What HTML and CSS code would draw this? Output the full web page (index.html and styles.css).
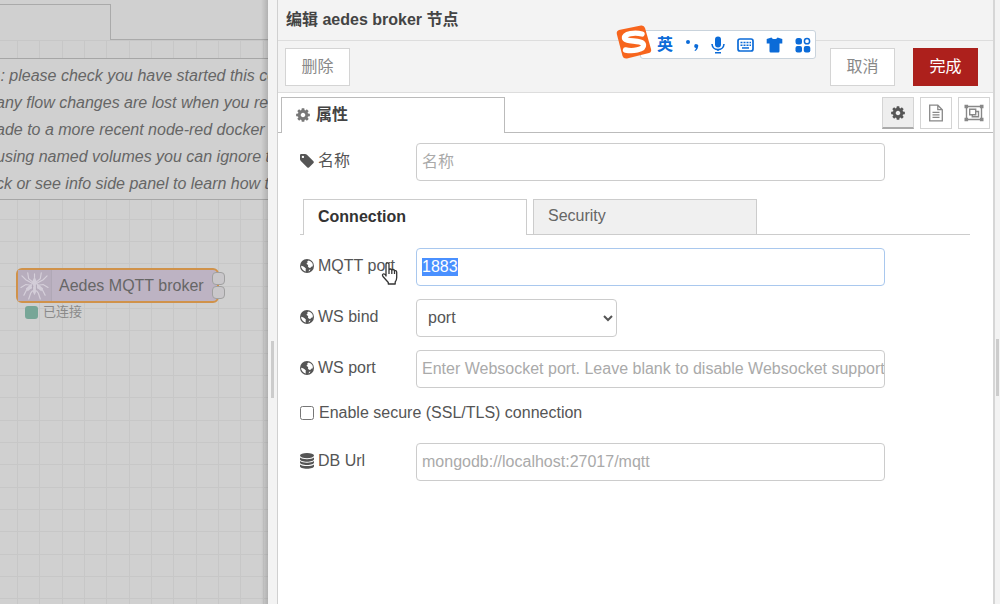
FILE: index.html
```
<!DOCTYPE html>
<html lang="zh-CN">

<head>
    <meta charset="UTF-8">
    <meta name="viewport" content="width=device-width, initial-scale=1.0">
    <title>Node-RED</title>
    <link rel="stylesheet" href="styles.css">
</head>

<body>
    <!-- shared icons -->
    <svg class="symbols" aria-hidden="true">
        <symbol id="icon-cog" viewBox="0 0 1792 1792">
            <path d="M1152 896q0-106-75-181t-181-75-181 75-75 181 75 181 181 75 181-75 75-181zm512-109v222q0 12-8 23t-20 13l-185 28q-19 54-39 91 35 50 107 138 10 12 10 25t-9 23q-27 37-99 108t-94 71q-12 0-26-9l-138-108q-44 23-91 38-16 136-29 186-7 28-36 28h-222q-14 0-24.5-8.5t-11.5-21.5l-28-184q-49-16-90-37l-141 107q-10 9-25 9-14 0-25-11-126-114-165-168-7-10-7-23 0-12 8-23 15-21 51-66.5t54-70.5q-27-50-41-99l-183-27q-13-2-21-12.5t-8-23.5v-222q0-12 8-23t19-13l186-28q14-46 39-92-40-57-107-138-10-12-10-24 0-10 9-23 26-36 98.5-107.5t94.5-71.5q13 0 26 10l138 107q44-23 91-38 16-136 29-186 7-28 36-28h222q14 0 24.5 8.5t11.5 21.5l28 184q49 16 90 37l142-107q9-9 24-9 13 0 25 10 129 119 165 170 7 8 7 22 0 12-8 23-15 21-51 66.5t-54 70.5q26 50 41 98l183 28q13 2 21 12.5t8 23.5z"/>
        </symbol>
        <symbol id="icon-tag" viewBox="0 128 1536 1536">
            <path d="M448 448q0-53-37.5-90.5t-90.5-37.5-90.5 37.5-37.5 90.5 37.5 90.5 90.5 37.5 90.5-37.5 37.5-90.5zm1067 576q0 53-37 90l-491 492q-39 37-91 37-53 0-90-37l-715-716q-38-37-64.5-101t-26.5-117v-416q0-52 38-90t90-38h416q53 0 117 26.5t102 64.5l715 714q37 39 37 91z"/>
        </symbol>
        <symbol id="icon-globe" viewBox="0 0 14 14">
            <circle cx="7" cy="7" r="7"/>
            <path fill="#fff" d="M7.300 2.200l1.500-.7 2 .9 1.500 1.700.6 1.900-.4 1.400-1.300.3-.9 1.200-1.300-.2-1.100-1.300.3-1.500-1.300-.6-.3-1.300 1-.3z"/>
            <path fill="#fff" d="M1.100 6.700l1.900.5 1.900 1.200 1.100 1.400-.5 1.200.6 1.500-1.900-.6-1.700-1.500-1.200-2z"/>
            <path fill="#fff" d="M9 11l1.500-.8-.7 1.500-1.200.7z"/>
        </symbol>
        <symbol id="icon-database" viewBox="0 0 14 16">
            <ellipse cx="7" cy="2.6" rx="7" ry="2.6"/>
            <path d="M0 4.6c1.400 1.200 4 1.700 7 1.700s5.600-.5 7-1.700v1.600c0 1.400-3 2.500-7 2.500s-7-1.100-7-2.500zM0 8c1.400 1.200 4 1.700 7 1.700s5.600-.5 7-1.700v1.600c0 1.400-3 2.500-7 2.500s-7-1.100-7-2.500zM0 11.400c1.400 1.200 4 1.700 7 1.700s5.600-.5 7-1.700v1.900c0 1.400-3 2.500-7 2.500s-7-1.100-7-2.500z"/>
        </symbol>
        <symbol id="icon-file" viewBox="0 0 16 18">
            <path fill="none" stroke="currentColor" stroke-width="1.300" d="M1.700 1.200h8.100l4.500 4.500v11.100H1.700zM9.800 1.200v4.500h4.500M4.500 8.300h7M4.500 10.800h7M4.500 13.300h7"/>
        </symbol>
        <symbol id="icon-group" viewBox="0 0 20 18">
            <path fill="none" stroke="currentColor" stroke-width="1.400" d="M3 2.500h14M3 15.500h14M2.500 3v12M17.500 3v12M5.700 5.200h6v5.600h-6zM11.700 7.500h2.800v5.300H8.300v-2"/>
            <path d="M.5.800h3.600v3.400H.5zM15.900.800h3.600v3.400h-3.600zM.5 13.800h3.600v3.400H.5zM15.900 13.800h3.600v3.400h-3.600z"/>
        </symbol>
    </svg>

    <div class="editor">
        <main class="workspace">
            <div class="workspace-tabs">
                <div class="workspace-tab"></div>
                <div class="workspace-tabs-rest"></div>
            </div>
            <div class="canvas">
                <svg class="grid" aria-hidden="true">
                    <defs>
                        <pattern id="grid" x="17" y="0" width="67" height="67" patternUnits="userSpaceOnUse">
                            <path d="M0 0h1v67H0zM22 0h1v67h-1zM45 0h1v67h-1zM0 0h67v1H0zM0 22h67v1H0zM0 45h67v1H0z" fill="#c7c7c7"/>
                        </pattern>
                    </defs>
                    <rect width="100%" height="100%" fill="url(#grid)"/>
                </svg>
                <div class="note">
                    <p>G: please check you have started this co<br>
                    any flow changes are lost when you rec<br>
                    ade to a more recent node-red docker in<br>
                    using named volumes you can ignore th<br>
                    ck or see info side panel to learn how to</p>
                </div>
                <div class="node">
                    <div class="node-body">
                        <svg class="node-icon" viewBox="0 0 30 30" aria-hidden="true">
                            <g fill="none" stroke="#d6d0da" stroke-width="1.200" stroke-linecap="round">
                                <path d="M14 12L9 8 8 2M16 12l5-4 1-6M13 13L6 9 2 5M17 13l7-4 4-4M13 15l-7-1-5 3M17 15l7-1 5 3M13 17l-6 2-3 6M17 17l6 2 3 6M14 19l-3 4-2 6M16 19l3 4 2 6"/>
                                <path d="M15 3v6"/>
                            </g>
                            <path fill="#d3cdd8" d="M15 6l2 4 1 5-1 6-2 4-2-4-1-6 1-5zM12 13l-6 5 2 3 6-5zM18 13l6 5-2 3-6-5z"/>
                            <path stroke="#b0a7b6" d="M13 14v6M17 14v6"/>
                        </svg>
                        <span class="node-label">Aedes MQTT broker</span>
                    </div>
                    <span class="port port-first"></span>
                    <span class="port port-second"></span>
                    <div class="node-status"><span class="status-dot"></span>已连接</div>
                </div>
            </div>
        </main>

        <div class="separator"><span class="grip"></span></div>

        <section class="tray">
            <h1 class="tray-title">编辑 aedes broker 节点</h1>
            <div class="tray-toolbar">
                <button type="button" class="button">删除</button>
                <div class="toolbar-right">
                    <button type="button" class="button">取消</button>
                    <button type="button" class="button primary">完成</button>
                </div>
            </div>

            <div class="tray-tabs">
                <span class="tab-edge"></span>
                <div class="tray-tab"><svg class="icon"><use href="#icon-cog"/></svg>属性</div>
                <div class="tray-tabs-rest">
                    <button type="button" class="icon-button selected" aria-label="属性"><svg class="icon"><use href="#icon-cog"/></svg></button>
                    <button type="button" class="icon-button" aria-label="描述"><svg class="icon-file"><use href="#icon-file"/></svg></button>
                    <button type="button" class="icon-button" aria-label="外观"><svg class="icon-group"><use href="#icon-group"/></svg></button>
                </div>
            </div>

            <form class="node-form">
                <div class="form-row">
                    <label for="name"><svg class="icon-label"><use href="#icon-tag"/></svg>名称</label>
                    <input type="text" id="name" placeholder="名称">
                </div>

                <div class="form-tabs">
                    <button type="button" class="form-tab active">Connection</button>
                    <button type="button" class="form-tab">Security</button>
                </div>

                <div class="form-row">
                    <label for="mqttPort"><svg class="icon-label"><use href="#icon-globe"/></svg>MQTT port</label>
                    <input type="text" id="mqttPort" value="1883">
                </div>
                <div class="form-row">
                    <label for="wsBind"><svg class="icon-label"><use href="#icon-globe"/></svg>WS bind</label>
                    <select id="wsBind">
                        <option>port</option>
                    </select>
                </div>
                <div class="form-row">
                    <label for="wsPort"><svg class="icon-label"><use href="#icon-globe"/></svg>WS port</label>
                    <input type="text" id="wsPort" placeholder="Enter Websocket port. Leave blank to disable Websocket support">
                </div>
                <div class="form-check">
                    <input type="checkbox" id="useTls">
                    <label for="useTls">Enable secure (SSL/TLS) connection</label>
                </div>
                <div class="form-row">
                    <label for="dbUrl"><svg class="icon-label icon-database"><use href="#icon-database"/></svg>DB Url</label>
                    <input type="text" id="dbUrl" placeholder="mongodb://localhost:27017/mqtt">
                </div>
            </form>
        </section>

        <div class="separator sidebar-separator"><span class="grip"></span></div>
    </div>

    <!-- input method bar floating over the editor -->
    <div class="ime">
        <svg class="ime-logo" viewBox="0 0 36 36" aria-hidden="true">
            <path fill="#f7651d" d="M3 5L25 0.500q3-.5 4 2.500l6 21q.8 3-2 4L11 33.500q-3.500.5-4.500-2.500L.8 9Q.2 6 3 5z"/>
            <path fill="none" stroke="#fff" stroke-width="5.400" stroke-linecap="round" d="M26 9C19 7 8 8.500 8.500 13c.5 4.500 18.500 1.500 19 7 .4 5-11 6.500-18 5"/>
        </svg>
        <div class="ime-bar">
            <span class="ime-mode">英</span>
            <svg width="14" height="18" viewBox="0 0 14 18"><circle cx="3" cy="6" r="2"/><path d="M9.200 10a2 2 0 1 1 3.800 1c-.3 2-1.400 3.500-3 4l-.5-.8c1-.6 1.400-1.300 1.400-2.200-1 0-1.700-.8-1.700-2z"/></svg>
            <svg width="14" height="18" viewBox="0 0 14 18"><rect x="4" y="0.500" width="6" height="11" rx="3"/><path fill="none" stroke="currentColor" stroke-width="1.600" d="M1 8c.5 7.500 11.500 7.500 12 0M7 13.500V15M4 16.700h6"/></svg>
            <svg width="17" height="18" viewBox="0 0 17 18"><rect x="1" y="3" width="15" height="12" rx="2" fill="none" stroke="currentColor" stroke-width="1.700"/><path fill="none" stroke="currentColor" stroke-width="1.500" stroke-dasharray="2 1" d="M3.500 6.500h10.500M3.500 9.200h10.500"/><path d="M5 11.200h7v1.500H5z"/></svg>
            <svg width="17" height="18" viewBox="0 0 17 18"><path d="M5.500 1.500c1 2 5 2 6 0L16.300 3v4.500h-2.800v7.800q0 1.200-1.200 1.200H4.700q-1.200 0-1.200-1.200V7.500H.7V3z"/></svg>
            <svg width="16" height="18" viewBox="0 0 16 18"><rect x="0.500" y="2" width="6.500" height="6.500" rx="2.500"/><circle cx="12" cy="5.200" r="2.600" fill="none" stroke="currentColor" stroke-width="1.500"/><rect x="0.500" y="10" width="6.500" height="6.500" rx="2"/><rect x="8.800" y="10" width="6.500" height="6.500" rx="2"/></svg>
        </div>
    </div>

    <svg class="pointer" viewBox="0 0 17 23" aria-hidden="true">
        <path fill="#fff" stroke="#333" stroke-width="1.300" stroke-linejoin="round" d="M5 14.500V2.500q0-1.700 1.500-1.700T8 2.500V8q.3-1 1.400-1t1.400 1.300q.4-.8 1.400-.8t1.300 1.500q.5-.6 1.300-.4.900.2.900 1.600v5.300q0 2.500-1.500 4.500v2H7.300v-1.500L2.200 14.800q-1.500-2 0-2.800 1.200-.5 2.800 1.500M8 8v4M10.800 8.500V12M13.500 9v3"/>
    </svg>

    <script>
        var mqttPort = document.getElementById("mqttPort");
        mqttPort.focus();
        mqttPort.select();
    </script>
</body>

</html>
```
FILE: styles.css
```
* {
    box-sizing: border-box;
}

body {
    margin: 0;
    height: 100vh;
    overflow: hidden;
    font-family: "Liberation Sans", "Noto Sans CJK SC", sans-serif;
    font-size: 16px;
    line-height: 20px;
    color: #555;
    background: #f3f3f3;
}

button,
input,
select {
    font: inherit;
    color: inherit;
}

svg {
    fill: currentColor;
    flex: none;
}

.symbols {
    position: absolute;
    width: 0;
    height: 0;
}

.editor {
    display: flex;
    height: 100%;
}

/* workspace */
.workspace {
    position: relative;
    display: flex;
    flex-direction: column;
    flex: 0 0 268px;
    overflow: hidden;
    background: #d0d0d0;
}

.workspace::after {
    content: "";
    position: absolute;
    top: 0;
    right: 0;
    bottom: 0;
    width: 7px;
    background: linear-gradient(to right, rgba(0, 0, 0, 0), rgba(0, 0, 0, 0.15));
}

.workspace-tabs {
    display: flex;
    height: 40px;
    padding-top: 4px;
}

.workspace-tab {
    width: 111px;
    border: solid #aaa;
    border-width: 1px 1px 0 0;
}

.workspace-tabs-rest {
    flex: 1;
    border-bottom: 1px solid #aaa;
}

.canvas {
    position: relative;
    flex: 1;
    padding-top: 18px;
}

.grid {
    position: absolute;
    top: 0;
    left: 0;
    width: 100%;
    height: 100%;
}

.note {
    position: relative;
    padding: 3px 0 2px;
    border: solid #a6a6a6;
    border-width: 1px 0;
    background: #d0d0d0;
    color: #666;
    font-style: italic;
    line-height: 27px;
    white-space: nowrap;
}

.note p {
    margin: 0 0 0 -4px;
    text-indent: -8px;
}

.node {
    position: absolute;
    top: 228px;
    left: 16px;
    width: 203px;
}

.node-body {
    display: flex;
    align-items: center;
    height: 35px;
    border: 2px solid #d0924a;
    border-radius: 6px;
    background: #bdb3c3;
}

.node-icon {
    width: 34px;
    height: 31px;
    padding: 1px;
    border-right: 1px solid #b0a8b6;
    background: #b7adbd;
}

.node-label {
    padding-left: 7px;
    color: #666;
}

.port {
    position: absolute;
    right: -6px;
    width: 13px;
    height: 13px;
    border: 1px solid #a0a0a0;
    border-radius: 4px;
    background: #c9c7ca;
}

.port-first {
    top: 4px;
}

.port-second {
    top: 18px;
}

.node-status {
    display: flex;
    align-items: center;
    gap: 5px;
    padding-left: 9px;
    font-size: 13px;
    line-height: 18px;
    color: #8a8a8a;
}

.status-dot {
    width: 13px;
    height: 13px;
    border-radius: 3px;
    background: #77a697;
}

/* resize bars */
.separator {
    display: flex;
    align-items: center;
    justify-content: center;
    flex: 0 0 10px;
    padding-top: 134px;
    border-right: 1px solid #d0d0d0;
    background: #f3f3f3;
}

.grip {
    width: 3px;
    height: 57px;
    background: #ccc;
}

.sidebar-separator {
    flex-basis: 7px;
    padding-top: 130px;
    border-right: 0;
    border-left: 2px solid #d6d6d6;
}

/* edit tray */
.tray {
    flex: 1;
    min-width: 0;
    background: #fff;
}

.tray-title {
    margin: 0;
    padding: 10px 8px;
    border-bottom: 1px solid #ddd;
    background: #f3f3f3;
    color: #444;
    font-size: 16px;
    line-height: 20px;
}

.tray-toolbar {
    display: flex;
    align-items: center;
    justify-content: space-between;
    height: 52px;
    padding: 0 15px 0 7px;
    border-bottom: 1px solid #ddd;
    background: #f3f3f3;
}

.toolbar-right {
    display: flex;
    gap: 18px;
}

.button {
    width: 65px;
    height: 38px;
    padding: 0;
    border: 1px solid #d4d4d4;
    background: #fff;
    color: #888;
    cursor: pointer;
}

.button.primary {
    border-color: #a9211d;
    background: #ad201c;
    color: #fff;
}

.tray-tabs {
    display: flex;
    height: 40px;
    padding-top: 4px;
}

.tab-edge {
    width: 3px;
    border-bottom: 1px solid #bbb;
}

.tray-tab {
    display: flex;
    align-items: center;
    gap: 5px;
    width: 224px;
    padding: 0 0 2px 13px;
    border: 1px solid #bbb;
    border-bottom: 0;
    color: #444;
    font-weight: bold;
}

.tray-tabs-rest {
    display: flex;
    flex: 1;
    justify-content: flex-end;
    gap: 6px;
    padding-right: 3px;
    border-bottom: 1px solid #bbb;
}

.icon {
    width: 16px;
    height: 16px;
    color: #777;
}

.icon-file {
    width: 16px;
    height: 18px;
}

.icon-group {
    width: 20px;
    height: 18px;
}

.icon-button {
    display: flex;
    align-items: center;
    justify-content: center;
    width: 32px;
    height: 32px;
    padding: 0;
    border: 1px solid #d4d4d4;
    background: #fff;
    color: #888;
    cursor: pointer;
}

.icon-button.selected {
    border-bottom: 2px solid #aaa;
    background: #eee;
}

.icon-button.selected .icon {
    color: #555;
}

.node-form {
    padding: 10px 23px 0 22px;
}

.form-row {
    display: flex;
    align-items: center;
    margin-bottom: 13px;
}

.form-row label {
    display: flex;
    align-items: center;
    gap: 4px;
    width: 116px;
    padding-bottom: 2px;
}

.icon-label {
    width: 14px;
    height: 14px;
}

.icon-database {
    height: 16px;
}

.form-row input {
    width: 70%;
    height: 38px;
    padding: 0 0 0 5px;
    border: 1px solid #ccc;
    border-radius: 4px;
    outline: 0;
    background: #fff;
}

.form-row input::placeholder {
    color: #aaa;
}

.form-row input:focus {
    border-color: #a9c8ee;
}

.form-row input::selection {
    background: #4a90ff;
    color: #fff;
}

.form-row select {
    width: 30%;
    height: 38px;
    padding: 0 0 2px 7px;
    border: 1px solid #ccc;
    border-radius: 4px;
    background: #fff;
}

.form-tabs {
    display: flex;
    gap: 6px;
    margin: 18px 0 13px;
    padding-left: 3px;
    border-bottom: 1px solid #ccc;
}

.form-tab {
    width: 224px;
    height: 35px;
    padding: 0 14px 2px;
    border: 1px solid #ccc;
    border-bottom: 0;
    background: #f0f0f0;
    color: #666;
    text-align: left;
    cursor: pointer;
}

.form-tab.active {
    margin-bottom: -1px;
    height: 36px;
    background: #fff;
    color: #333;
    font-weight: bold;
}

.form-check {
    display: flex;
    align-items: center;
    gap: 5px;
    margin: 15px 0 20px;
}

.form-check input {
    width: 14px;
    height: 14px;
    margin: 0;
}

/* input method bar */
.ime {
    position: absolute;
    top: 25px;
    left: 616px;
    display: flex;
}

.ime-logo {
    z-index: 1;
    width: 36px;
    height: 36px;
}

.ime-bar {
    display: flex;
    align-items: center;
    gap: 12px;
    height: 29px;
    margin: 5px 0 0 -12px;
    padding: 0 4px 0 16px;
    border: 1px solid #c9d3dc;
    border-radius: 3px;
    background: #fff;
    color: #0b6bd8;
}

.ime-mode {
    font-weight: bold;
}

.pointer {
    position: absolute;
    top: 262px;
    left: 381px;
    width: 17px;
    height: 23px;
}
```
